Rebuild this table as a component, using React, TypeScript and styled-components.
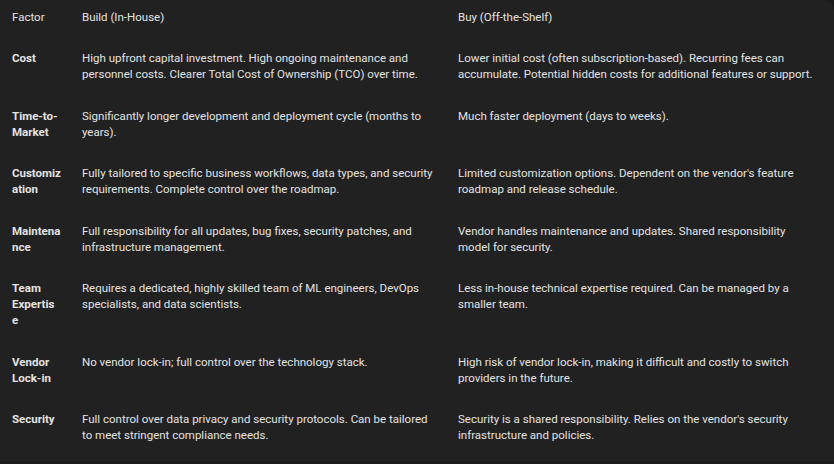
import React from "react"
import styled, { createGlobalStyle } from "styled-components"

const GlobalStyle = createGlobalStyle`
  html, body {
    margin: 0;
    padding: 0;
    background: #1b1b1c;
  }
  body {
    font-family: Roboto, "Liberation Sans", Arial, sans-serif;
    -webkit-font-smoothing: antialiased;
  }
`

const Panel = styled.div`
  width: 834px;
  height: 461px;
  box-sizing: border-box;
  background: #212121;
  border-top-right-radius: 10px;
  overflow: hidden;
`

const Grid = styled.div`
  display: grid;
  grid-template-columns: 70px 376px 1fr;
`

const Cell = styled.div<{ $head?: boolean; $label?: boolean; $last?: boolean }>`
  padding: ${(p) => (p.$head ? "9px 12px 15px 12px" : "10px 12px 15.5px 12px")};
  padding-right: ${(p) => (p.$label ? "4px" : p.$last ? "14px" : "8px")};
  font-size: 11.5px;
  line-height: 16px;
  color: #e3e3e3;
  font-weight: ${(p) => (p.$label ? 700 : 400)};
  white-space: ${(p) => (p.$label ? "pre-line" : "normal")};
`

type Row = { factor: string; build: string; buy: string }

// factor labels keep the narrow column's breaks as they appear
const rows: Row[] = [
  {
    factor: "Cost",
    build:
      "High upfront capital investment. High ongoing maintenance and personnel costs. Clearer Total Cost of Ownership (TCO) over time.",
    buy: "Lower initial cost (often subscription-based). Recurring fees can accumulate. Potential hidden costs for additional features or support.",
  },
  {
    factor: "Time-to-\nMarket",
    build: "Significantly longer development and deployment cycle (months to years).",
    buy: "Much faster deployment (days to weeks).",
  },
  {
    factor: "Customiz\nation",
    build:
      "Fully tailored to specific business workflows, data types, and security requirements. Complete control over the roadmap.",
    buy: "Limited customization options. Dependent on the vendor's feature roadmap and release schedule.",
  },
  {
    factor: "Maintena\nnce",
    build: "Full responsibility for all updates, bug fixes, security patches, and infrastructure management.",
    buy: "Vendor handles maintenance and updates. Shared responsibility model for security.",
  },
  {
    factor: "Team\nExpertis\ne",
    build: "Requires a dedicated, highly skilled team of ML engineers, DevOps specialists, and data scientists.",
    buy: "Less in-house technical expertise required. Can be managed by a smaller team.",
  },
  {
    factor: "Vendor\nLock-in",
    build: "No vendor lock-in; full control over the technology stack.",
    buy: "High risk of vendor lock-in, making it difficult and costly to switch providers in the future.",
  },
  {
    factor: "Security",
    build: "Full control over data privacy and security protocols. Can be tailored to meet stringent compliance needs.",
    buy: "Security is a shared responsibility. Relies on the vendor's security infrastructure and policies.",
  },
]

export default function App() {
  return (
    <>
      <GlobalStyle />
      <Panel>
        <Grid>
          <Cell $head>Factor</Cell>
          <Cell $head>Build (In-House)</Cell>
          <Cell $head $last>Buy (Off-the-Shelf)</Cell>
          {rows.map((r) => (
            <React.Fragment key={r.factor}>
              <Cell $label>{r.factor}</Cell>
              <Cell>{r.build}</Cell>
              <Cell $last>{r.buy}</Cell>
            </React.Fragment>
          ))}
        </Grid>
      </Panel>
    </>
  )
}
